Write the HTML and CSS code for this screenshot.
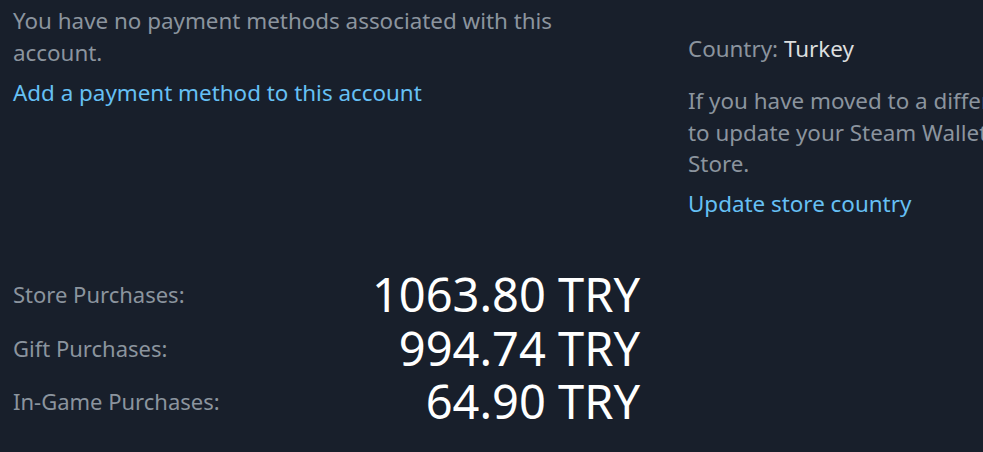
FILE: index.html
```html
<!DOCTYPE html>
<html lang="en">
<head>
<meta charset="utf-8">
<title>Account</title>
<link rel="stylesheet" href="styles.css">
</head>
<body>
<div class="page">
  <section class="col-left">
    <p class="muted">You have no payment methods associated with this account.</p>
    <a class="link" href="#">Add a payment method to this account</a>
    <div class="totals">
      <div class="label">Store Purchases:</div>
      <div class="amount">1063.80 TRY</div>
      <div class="label">Gift Purchases:</div>
      <div class="amount">994.74 TRY</div>
      <div class="label">In-Game Purchases:</div>
      <div class="amount">64.90 TRY</div>
    </div>
  </section>
  <section class="col-right">
    <p class="muted country">Country: <span class="value">Turkey</span></p>
    <p class="muted notice">If you have moved to a different country, you will need<br>to update your Steam Wallet currency before purchasing from the<br>Store.</p>
    <a class="link" href="#">Update store country</a>
  </section>
</div>
</body>
</html>
```

FILE: styles.css
```css
html, body {
  margin: 0;
  background: #181f2b;
}
body {
  font-family: "Noto Sans", "Open Sans", sans-serif;
  font-size: 22.4px;
  line-height: 31.5px;
  color: #8b949e;
  overflow: hidden;
}
.page {
  display: grid;
  grid-template-columns: 627px 800px;
  column-gap: 48px;
  padding: 5px 0 0 13px;
}
p {
  margin: 0;
}
.link {
  display: block;
  color: #66c0f4;
  text-decoration: none;
  margin-top: 8.5px;
}
.totals {
  display: grid;
  grid-template-columns: auto 1fr;
  align-items: center;
  margin-top: 160px;
}
.label {
  font-size: 22px;
}
.amount {
  text-align: right;
  font-size: 47px;
  line-height: 53.5px;
  color: #ffffff;
}
.col-right {
  padding-top: 28px;
}
.country {
  margin-bottom: 20.5px;
}
.notice {
  white-space: nowrap;
}
.value {
  color: #dcdedf;
}
```
